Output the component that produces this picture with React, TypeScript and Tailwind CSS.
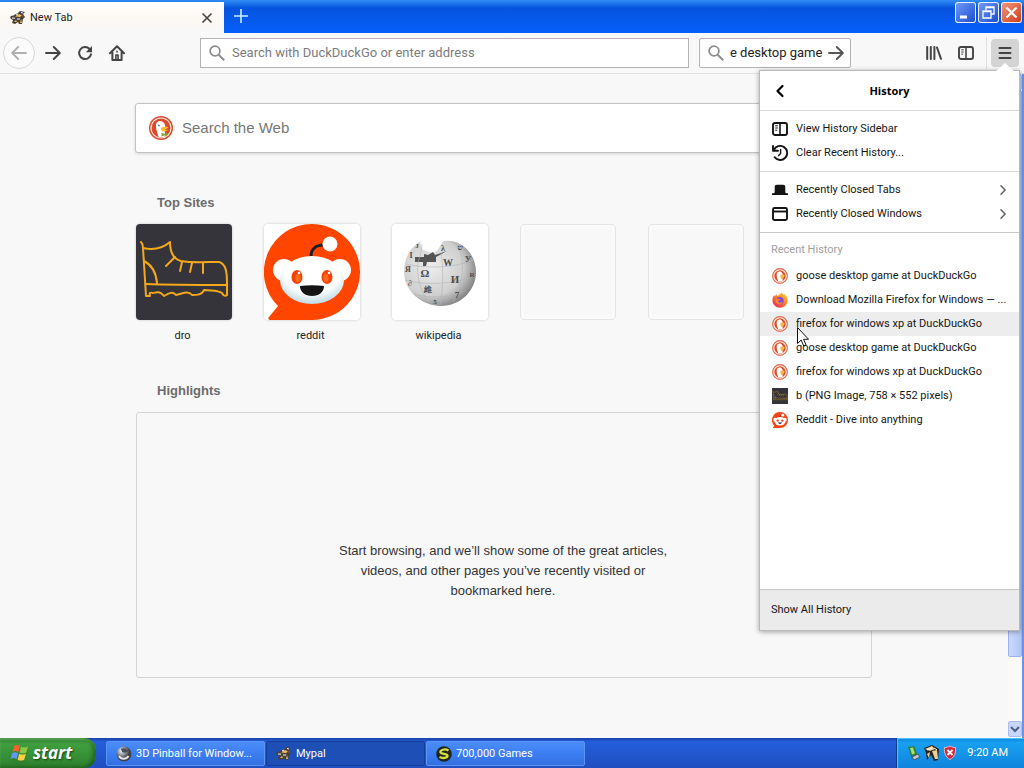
import type { ReactNode } from "react";

const iconBase = "shrink-0 block";

function SearchIcon({ className = "" }: { className?: string }) {
  return (
    <svg viewBox="0 0 16 16" className={`${iconBase} h-4 w-4 ${className}`} fill="none" stroke="currentColor" strokeWidth="1.7">
      <circle cx="6" cy="6" r="4.9" />
      <path d="M9.7 9.7 15.2 15.2" strokeWidth="2" />
    </svg>
  );
}

function ArrowIcon({ left = false, className = "" }: { left?: boolean; className?: string }) {
  return (
    <svg viewBox="0 0 16 16" className={`${iconBase} h-4 w-4 ${className}`} fill="none" stroke="currentColor" strokeWidth="1.9" strokeLinecap="round" strokeLinejoin="round">
      {left ? <path d="M15 8H1.3M7.2 2 1.2 8l6 6" /> : <path d="M1 8h13.7M8.8 2l6 6-6 6" />}
    </svg>
  );
}

function ReloadIcon() {
  return (
    <svg viewBox="0 0 16 16" className={`${iconBase} h-4 w-4`}>
      <path d="M14 9.2A6 6 0 1 1 12.6 4" fill="none" stroke="currentColor" strokeWidth="2" strokeLinecap="round" />
      <path d="M15 1v6.2H8.8z" fill="currentColor" />
    </svg>
  );
}

function HomeIcon() {
  return (
    <svg viewBox="0 0 16 16" className={`${iconBase} h-4 w-4`} fill="none" stroke="currentColor" strokeWidth="2" strokeLinecap="round" strokeLinejoin="round">
      <path d="M1 8.2 8 1.3l7 6.9M3.4 7.5V15h9.2V7.5" />
      <path d="M6.9 14.5V10h2.2v4.5" strokeWidth="1.6" />
      <path d="M8 6.3v.6" strokeWidth="1.6" />
    </svg>
  );
}

function LibraryIcon() {
  return (
    <svg viewBox="0 0 16 16" className={`${iconBase} h-4 w-4`} fill="none" stroke="currentColor" strokeWidth="2" strokeLinecap="round">
      <path d="M1.2 2v12M4.8 2v12M8.4 2v12M11 2.5l4 11.3" />
    </svg>
  );
}

function SidebarIcon() {
  return (
    <svg viewBox="0 0 16 16" className={`${iconBase} h-4 w-4`} fill="none" stroke="currentColor" strokeWidth="1.9">
      <rect x="1" y="2" width="14" height="12" rx="2" />
      <path d="M8 2v12" strokeWidth="1.6" />
      <path d="M3.2 4.8h2.6M3.2 7h2.6M3.2 9.2h2" strokeWidth="1" />
    </svg>
  );
}

function HistoryIcon() {
  return (
    <svg viewBox="0 0 16 16" className={`${iconBase} h-4 w-4`} fill="none" stroke="currentColor" strokeWidth="1.9" strokeLinecap="round">
      <path d="M1.8 5A7 7 0 1 1 2.6 12.200" />
      <path d="M1 1v4.800h5" strokeLinejoin="round" />
      <path d="M8.600 4.500v4L6.500 10.800" strokeWidth="1.400" />
    </svg>
  );
}

function TabShapeIcon() {
  return (
    <svg viewBox="0 0 16 16" className={`${iconBase} h-4 w-4`} fill="currentColor">
      <path d="M0 11.2h1.5c1 0 1.2-.6 1.2-1.4V5c0-1.5.8-2.2 2.200-2.200h6.200c1.400 0 2.200.7 2.200 2.200v4.800c0 .8.2 1.400 1.200 1.400H16V13H0z" />
    </svg>
  );
}

function WindowIcon() {
  return (
    <svg viewBox="0 0 16 16" className={`${iconBase} h-4 w-4`} fill="none" stroke="currentColor" strokeWidth="1.9">
      <rect x="1" y="2" width="14" height="12" rx="1.5" />
      <path d="M1 5.5h14" />
    </svg>
  );
}

function ChevronIcon() {
  return (
    <svg viewBox="0 0 8 12" className={`${iconBase} h-3 w-2 text-[#666]`} fill="none" stroke="currentColor" strokeWidth="1.6" strokeLinecap="round">
      <path d="m2 1.8 4 4.2-4 4.2" />
    </svg>
  );
}

function DuckLogo() {
  return (
    <svg viewBox="0 0 24 24" className="block h-6 w-6 shrink-0">
      <circle cx="12" cy="12" r="12" fill="#d9482b" />
      <circle cx="12" cy="12" r="10.6" fill="#fbe9df" />
      <circle cx="12" cy="12" r="9.4" fill="#dc4a28" />
      <path d="M9.500 20.800C8 16 6.500 12 7 8.500 7.500 5.500 11 4 14 6c2 1.300 2.500 3.500 2.300 6l-.6 3.200.8 5.100c-2.300 1-5 1.200-7 .5z" fill="#fff" />
      <path d="M12 12c2-1.400 5-1.500 7.500-.8-.9 1.400-3 1.700-4.500 2.100 1.500.6 3 .6 4 .4-1.800 2.400-6.400 2.200-7 0z" fill="#fdb92b" />
      <path d="m12.500 17 3.300.8 2.200-.9v3.200l-2.500-.6-3 1z" fill="#86a33c" />
      <circle cx="10" cy="9.500" r="1.100" fill="#6f93c4" />
    </svg>
  );
}

function DuckFavicon() {
  return (
    <svg viewBox="0 0 16 16" className="block h-4 w-4 shrink-0">
      <circle cx="8" cy="8" r="7.400" fill="#fdeee4" stroke="#dc6a4c" strokeWidth="1.100" />
      <circle cx="8" cy="8" r="5.700" fill="#d9502c" />
      <path d="M6.200 13C5 10.500 4.400 8 4.800 5.800 5.200 3.800 7.400 3 9.200 4c1.200.8 1.600 2.200 1.500 3.800L10.300 10l.5 3c-1.500.5-3.200.6-4.600 0z" fill="#fff" />
      <path d="M8.300 7.200c1.500-.8 3-.8 4.300-.3-.3 1.900-1.300 3.600-2.400 4.600-1.200-.8-2-2.600-1.900-4.300z" fill="#efb845" />
    </svg>
  );
}

function FirefoxIcon() {
  return (
    <svg viewBox="0 0 16 16" className="block h-4 w-4 shrink-0">
      <defs>
        <linearGradient id="fox" x1="1" y1="0" x2=".2" y2="1">
          <stop offset="0" stopColor="#ffe23f" />
          <stop offset=".45" stopColor="#ff8b25" />
          <stop offset="1" stopColor="#ec2457" />
        </linearGradient>
      </defs>
      <path d="M9.500.3c1 1.200 1.500 2 1.800 2.800.7-.1.900-.5.900-1 2 1.500 3.500 3.800 3.500 6.400A7.600 7.400 0 0 1 .4 8.300c0-2 .6-3.700 1.700-5l.7 1.300C3.500 3 4 2.500 4.500 2.200L5 4c1.800-.2 3.300-1.800 4.500-3.700z" fill="url(#fox)" />
      <circle cx="8" cy="8.800" r="3.700" fill="#8547d8" />
      <path d="M3.600 7.200c2-1.300 3.600.2 4.900 0-.5 1.500-2.200 1-2.500 2.100.8 1.900 3.300 1.700 4.800.2-.4 2.700-3.100 3.500-5 2.600-1.700-.8-2.500-2.700-2.200-4.900z" fill="#ff8430" />
    </svg>
  );
}

function BootTile() {
  return (
    <svg viewBox="0 0 96 96" className="block h-full w-full">
      <path fill="#34343a" d="M0 0h96v96H0z" />
      <g fill="none" stroke="#f5a81c" strokeWidth="2" strokeLinejoin="round" strokeLinecap="round">
        <path d="M5 18c2 2 2 6 2 6 9 2 19 1 27-6 0 9 3 17 11 19 10 2 25 1 38 1 7 2 8 10 8 21v12c-2 2-4 0-5-2-4-3-10-2-18-3-2 5-7 5-12 5-4-5-10-1-16 0-3-4-7-2-12 1-4-5-7-4-11-3-3-1-4 0-3 3h-4L7 24" />
        <path d="M10 60c25 1 57 1 81 1M8 37c8 4 12 11 13 22" />
        <path d="m39 33-9 9M46 38l-2 9M56 39l-2 9M67 39v10" />
      </g>
    </svg>
  );
}

function RedditArt() {
  return (
    <svg viewBox="0 0 96 96" className="block h-full w-full">
      <defs>
        <radialGradient id="snooFace" cx=".5" cy=".35" r=".65">
          <stop offset=".65" stopColor="#fff" />
          <stop offset="1" stopColor="#bfd9e2" />
        </radialGradient>
      </defs>
      <path fill="#ff4500" d="M48 0a48 48 0 1 1 0 96H6c-2 0-2-2-1-3l9-11A48 48 0 0 1 48 0z" />
      <circle cx="20" cy="46" r="11" fill="#fff" />
      <circle cx="76" cy="46" r="11" fill="#fff" />
      <ellipse cx="48" cy="56" rx="32" ry="24" fill="url(#snooFace)" />
      <path d="M47 32c0-6 4-11 13-11" fill="none" stroke="#182028" strokeWidth="3" />
      <circle cx="66" cy="20" r="7.500" fill="#fff" />
      <ellipse cx="33" cy="53" rx="5.500" ry="7" fill="#f6410a" />
      <ellipse cx="63" cy="53" rx="5.500" ry="7" fill="#f6410a" />
      <ellipse cx="34" cy="54" rx="2.500" ry="4" fill="#ff6a18" />
      <ellipse cx="62" cy="54" rx="2.500" ry="4" fill="#ff6a18" />
      <circle cx="35" cy="49" r="1.300" fill="#fff" />
      <circle cx="65" cy="49" r="1.300" fill="#fff" />
      <path d="M36 62c8-1 16-1 24 0 0 6-5 10-12 10s-12-4-12-10z" fill="#141414" />
    </svg>
  );
}

function RedditIcon() {
  return (
    <svg viewBox="0 0 16 16" className="block h-4 w-4 shrink-0">
      <path fill="#f4451a" d="M8 0a8 8 0 1 1 0 16H.8l1.500-2.400A8 8 0 0 1 8 0z" />
      <circle cx="3.200" cy="7.700" r="1.900" fill="#fff" />
      <circle cx="12.800" cy="7.700" r="1.900" fill="#fff" />
      <ellipse cx="8" cy="9.200" rx="5.500" ry="4.200" fill="#fff" />
      <path d="M8 5c0-1 .7-1.800 2-2" stroke="#333" fill="none" />
      <circle cx="10.800" cy="3.200" r="1.400" fill="#fff" />
      <circle cx="5.700" cy="8.600" r="1.200" fill="#f4451a" />
      <circle cx="10.300" cy="8.600" r="1.200" fill="#f4451a" />
      <path d="M6 10.500h4c-.4 1.900-3.600 1.900-4 0z" fill="#222" />
    </svg>
  );
}

function WikipediaArt() {
  return (
    <svg viewBox="0 0 96 96" className="block h-full w-full">
      <defs>
        <radialGradient id="globe" cx=".38" cy=".4" r=".68">
          <stop offset="0" stopColor="#ededed" />
          <stop offset=".65" stopColor="#cfcfcf" />
          <stop offset="1" stopColor="#777" />
        </radialGradient>
      </defs>
      <path d="M29 17c-2 4 1 6 2 9 4 1 8 4 12 2 4-2 5-8 9-11 18-2 32 13 32 31 0 19-16 34-35 34S12 67 12 48c0-14 6-25 17-31z" fill="url(#globe)" />
      <path d="M23 33h9v-3l4 1 5-3 2 3 12-4-11 6v5h-9l-1 4h-3v-4h-8z" fill="#555" />
      <path d="M30 20c-1 9-2 12-4 18-2 14 3 32 11 40M49 28c2 15 3 34-1 53M66 21c7 16 6 38-5 57M14 40c20 5 48 4 68-4M13 56c23 6 49 4 69-4M22 70c16 5 35 4 51-3" fill="none" stroke="#b4b4b4" strokeWidth=".6" />
      <g fill="#4c4c4c" fontFamily="'Liberation Serif', serif" fontWeight="bold" textAnchor="middle">
        <text x="33" y="53" fontSize="11">Ω</text>
        <text x="56" y="42" fontSize="10">W</text>
        <text x="63" y="59" fontSize="11">И</text>
        <text x="36" y="68" fontSize="8">維</text>
        <text x="65" y="74" fontSize="9">7</text>
        <text x="76" y="38" fontSize="9">У</text>
        <text x="68" y="26" fontSize="8">ש</text>
        <text x="51" y="27" fontSize="8">λ</text>
        <text x="19" y="34" fontSize="8">Ι</text>
        <text x="16" y="48" fontSize="8">Я</text>
        <text x="18" y="62" fontSize="8">∂</text>
        <text x="80" y="53" fontSize="7">R</text>
        <text x="43" y="80" fontSize="7">5</text>
        <text x="25" y="24" fontSize="7">J</text>
      </g>
    </svg>
  );
}

function MypalIcon() {
  return (
    <svg viewBox="0 0 16 16" className="block h-4 w-4 shrink-0">
      <path d="M0 7c2-2 3-.5 4-2l4-2 2-2 5 1-2 2 2 3-2 2-1 5h-3l-1-2-3 2-3-1 1-3-2-1z" fill="#47413a" />
      <path d="M5 6.500 9 4l3 1.500L10 7zM4 12l2-2 1 2zM10 13l1-4 1 4z" fill="#e9bc5d" />
      <path d="m2 8 3 .2M7 9h3M11 2.500l2 .5M6 5l2-1" stroke="#fff" strokeWidth="1" />
      <path d="M12 6h2" stroke="#b3413a" />
    </svg>
  );
}

function WindowsFlag() {
  return (
    <svg viewBox="0 0 20 20" className="block h-5 w-5 shrink-0 drop-shadow-sm">
      <path d="M4 3c2-1.500 4-1.200 6 0L8.400 9c-2-1.200-4-1.300-6-.2z" fill="#f0632c" />
      <path d="M11 3.500c2 1.200 4.300 1.300 7 0L16.200 9.500c-2.400 1.200-4.500 1.100-6.700 0z" fill="#8ccb3f" />
      <path d="M2.100 10c2-1.200 4-1 6 .2l-1.600 6c-2-1.400-4-1.400-6.200-.2z" fill="#5f98f0" />
      <path d="M9.200 10.700c2.200 1.200 4.300 1.200 6.700 0l-1.700 6c-2.400 1.200-4.600 1.200-6.600 0z" fill="#fbd143" />
    </svg>
  );
}

function PinballIcon() {
  return (
    <svg viewBox="0 0 16 16" className="block h-4 w-4 shrink-0">
      <defs>
        <radialGradient id="ball" cx=".35" cy=".3">
          <stop offset="0" stopColor="#fff" />
          <stop offset=".5" stopColor="#9a9ca1" />
          <stop offset="1" stopColor="#404249" />
        </radialGradient>
      </defs>
      <circle cx="8" cy="8" r="7.500" fill="url(#ball)" />
      <path d="M5 3c2-1.500 6-.5 7 2-1 2-5 2-6 1z" fill="#4a4f5d" />
      <path d="M3 10c2 3.500 7 4 9.500 0" stroke="#e7e7e7" strokeWidth="2" fill="none" />
    </svg>
  );
}

function GamesIcon() {
  return (
    <svg viewBox="0 0 16 16" className="block h-4 w-4 shrink-0">
      <circle cx="8" cy="8" r="7.800" fill="#20251c" />
      <path d="M12.500 4.500C9 2.300 3.800 4 4.500 6.500c.8 2 7 .8 7 3.300 0 2.200-4.500 3-8 1.200" fill="none" stroke="#d5df42" strokeWidth="2.300" />
    </svg>
  );
}

const topSites: { name: string; art: ReactNode }[] = [
  { name: "dro", art: <BootTile /> },
  { name: "reddit", art: <RedditArt /> },
  { name: "wikipedia", art: <WikipediaArt /> },
];

const historyItems: { title: string; icon: ReactNode; active?: boolean }[] = [
  { title: "goose desktop game at DuckDuckGo", icon: <DuckFavicon /> },
  { title: "Download Mozilla Firefox for Windows — ...", icon: <FirefoxIcon /> },
  { title: "firefox for windows xp at DuckDuckGo", icon: <DuckFavicon />, active: true },
  { title: "goose desktop game at DuckDuckGo", icon: <DuckFavicon /> },
  { title: "firefox for windows xp at DuckDuckGo", icon: <DuckFavicon /> },
  {
    title: "b (PNG Image, 758 × 552 pixels)",
    icon: (
      <div className="h-4 w-4 shrink-0">
        <BootTile />
      </div>
    ),
  },
  { title: "Reddit - Dive into anything", icon: <RedditIcon /> },
];

function MenuRow({ icon, label, submenu, active }: { icon: ReactNode; label: string; submenu?: boolean; active?: boolean }) {
  return (
    <li>
      <button className={`flex h-6 w-full items-center gap-2 px-3 text-left ${active ? "bg-[#ededed]" : ""}`}>
        {icon}
        <span className="min-w-0 flex-1 truncate">{label}</span>
        {submenu && <ChevronIcon />}
      </button>
    </li>
  );
}

function HistoryPanel() {
  return (
    <section
      aria-label="History"
      className="absolute top-[37px] right-1 z-20 flex h-[561px] w-[261px] flex-col border border-[#b9b9b9] bg-white text-[#151515] shadow-[0_1px_5px_rgba(0,0,0,0.35)]"
    >
      <svg viewBox="0 0 20 9" className="absolute -top-2 right-1 h-[9px] w-5">
        <path d="M0 9 10 0l10 9z" fill="#fff" />
      </svg>
      <header className="flex h-10 shrink-0 items-center border-b border-[#d9d9d9] px-3">
        <button aria-label="Back" className="flex h-6 w-4 items-center justify-center text-black">
          <svg viewBox="0 0 16 16" className="h-4 w-4" fill="none" stroke="currentColor" strokeWidth="2.200" strokeLinecap="round" strokeLinejoin="round">
            <path d="M10.500 3 5.500 8l5 5" />
          </svg>
        </button>
        <h2 className="flex-1 pr-4 text-center font-['Open_Sans',sans-serif] font-bold text-black">History</h2>
      </header>
      <ul className="border-b border-[#d9d9d9] py-[6px]">
        <MenuRow icon={<SidebarIcon />} label="View History Sidebar" />
        <MenuRow icon={<HistoryIcon />} label="Clear Recent History..." />
      </ul>
      <ul className="border-b border-[#c9c9c9] py-[6px]">
        <MenuRow icon={<TabShapeIcon />} label="Recently Closed Tabs" submenu />
        <MenuRow icon={<WindowIcon />} label="Recently Closed Windows" submenu />
      </ul>
      <h3 className="px-[11px] pt-[9px] pb-[6px] leading-4 text-[#a0a0a0]">Recent History</h3>
      <ul className="flex-1">
        {historyItems.map((item, i) => (
          <MenuRow key={i} icon={item.icon} label={item.title} active={item.active} />
        ))}
      </ul>
      <button className="h-[41px] shrink-0 border-t border-[#c4c4c4] bg-[#ebebeb] px-[11px] text-left">Show All History</button>
      <svg viewBox="0 0 12 20" className="absolute top-[256px] left-[37px] z-30 h-5 w-3">
        <path d="M.5.5v16l3.700-3.500 2.500 6 2.400-1-2.500-5.700h5z" fill="#fff" stroke="#111" />
      </svg>
    </section>
  );
}

function Toolbar() {
  return (
    <div className="relative flex h-[41px] shrink-0 items-center border-b border-[#e2e2e2] bg-[#f8f8f9] pr-[5px] text-[#444]">
      <div className="flex w-[200px] shrink-0 items-center">
        <button aria-label="Back" className="ml-[3px] flex h-8 w-8 items-center justify-center rounded-full border border-[#d8d8d8] bg-[#fbfbfb] text-[#b0b0b0]">
          <ArrowIcon left />
        </button>
        <button aria-label="Forward" className="flex h-8 w-8 items-center justify-center pl-1">
          <ArrowIcon />
        </button>
        <button aria-label="Reload" className="flex h-8 w-8 items-center justify-center pl-1">
          <ReloadIcon />
        </button>
        <button aria-label="Home" className="flex h-8 w-8 items-center justify-center pl-1">
          <HomeIcon />
        </button>
      </div>
      <label className="flex h-[30px] min-w-0 flex-1 items-center gap-[7px] border border-[#b4b4b4] bg-white px-2">
        <SearchIcon className="text-[#8c8c8c]" />
        <input aria-label="Address" placeholder="Search with DuckDuckGo or enter address" className="min-w-0 flex-1 bg-transparent text-[13px] outline-none placeholder:text-[#7c7c7c]" />
      </label>
      <div className="ml-[10px] flex h-[30px] w-[152px] shrink-0 items-center rounded-xs border border-[#b4b4b4] bg-white px-2">
        <SearchIcon className="text-[#8c8c8c]" />
        <input aria-label="Search" defaultValue="e desktop game" className="ml-[6px] w-0 min-w-0 flex-1 bg-transparent text-[13px] text-[#222] outline-none" />
        <button aria-label="Go" className="-mr-[2px] text-[#555]">
          <ArrowIcon />
        </button>
      </div>
      <div className="ml-[67px] flex shrink-0 items-center">
        <button aria-label="Library" className="flex h-8 w-8 items-center justify-center">
          <LibraryIcon />
        </button>
        <button aria-label="Sidebars" className="flex h-8 w-8 items-center justify-center">
          <SidebarIcon />
        </button>
        <div className="mr-1 ml-1 h-8 w-px bg-[#ddd]" />
        <button aria-label="Open menu" className="flex h-7 w-7 items-center justify-center rounded-sm bg-[#d4d4d4]">
          <svg viewBox="0 0 16 16" className="h-4 w-4" stroke="currentColor" strokeWidth="2" strokeLinecap="round">
            <path d="M2.500 3h11M2.500 8h11M2.500 13h11" />
          </svg>
        </button>
      </div>
      <HistoryPanel />
    </div>
  );
}

function TitleBar() {
  return (
    <div className="flex h-[33px] shrink-0 items-start bg-linear-to-b from-[#2f8cf5] via-[#0653dd] via-25% to-[#0560fb]">
      <div className="mt-[2px] flex h-[31px] w-[224px] items-center bg-linear-to-b from-white via-[#fdf8f2] to-[#f8f8f9] pr-[9px] pl-[10px] text-[#222]">
        <MypalIcon />
        <span className="ml-1 flex-1">New Tab</span>
        <button aria-label="Close tab" className="flex h-4 w-4 items-center justify-center text-[#444]">
          <svg viewBox="0 0 12 12" className="h-3 w-3" stroke="currentColor" strokeWidth="1.600">
            <path d="m1.500 1.500 9 9M10.500 1.500l-9 9" />
          </svg>
        </button>
      </div>
      <button aria-label="New tab" className="flex h-8 w-[34px] items-center justify-center text-[#cdf0ff]">
        <svg viewBox="0 0 14 14" className="h-[14px] w-[14px]" stroke="currentColor" strokeWidth="1.600">
          <path d="M7 0v14M0 7h14" />
        </svg>
      </button>
      <div className="mt-[2px] mr-[2px] ml-auto flex gap-[2px]">
        <button aria-label="Minimize" className="h-[21px] w-[21px] rounded-[3px] border border-white/90 bg-linear-to-br from-[#6f98f5] to-[#1c4ed0]">
          <svg viewBox="0 0 19 19" className="h-full w-full">
            <path d="M4 12.500h7v3H4z" fill="#fff" />
          </svg>
        </button>
        <button aria-label="Restore" className="h-[21px] w-[21px] rounded-[3px] border border-white/90 bg-linear-to-br from-[#6f98f5] to-[#1c4ed0]">
          <svg viewBox="0 0 19 19" className="h-full w-full" fill="none" stroke="#fff" strokeWidth="1.300">
            <path d="M7 7V4h8v7h-3M7 4.500h8M4 8h8v7H4zM4 8.700h8" />
          </svg>
        </button>
        <button aria-label="Close" className="h-[21px] w-[21px] rounded-[3px] border border-white/90 bg-linear-to-br from-[#f09376] to-[#cf3c0c]">
          <svg viewBox="0 0 19 19" className="h-full w-full" stroke="#fff" strokeWidth="2.200">
            <path d="m4.500 4.500 10 10M14.500 4.500l-10 10" />
          </svg>
        </button>
      </div>
    </div>
  );
}

function NewTabPage() {
  return (
    <main className="min-w-0 flex-1 bg-[#f8f8f9] px-6 pt-[29px] pb-[60px] font-['Liberation_Sans',Arial,sans-serif]">
      <div className="mx-auto max-w-[738px]">
        <label className="flex h-[50px] items-center gap-[9px] rounded-[3px] border border-[#c3c3c3] bg-white px-[13px] shadow-[0_1px_3px_rgba(0,0,0,0.15)]">
          <DuckLogo />
          <input aria-label="Search the Web" placeholder="Search the Web" className="min-w-0 flex-1 bg-transparent text-[15px] outline-none placeholder:text-[#777]" />
        </label>
        <h2 className="mt-10 ml-[22px] text-[13px] leading-5 font-bold text-[#6c6c6c]">Top Sites</h2>
        <ul className="mt-[11px] flex gap-8 px-px">
          {topSites.map((site) => (
            <li key={site.name} className="w-24 shrink-0">
              <a href={`#${site.name}`} className="block">
                <div className="h-24 overflow-hidden rounded-[4px] bg-white shadow-[0_0_3px_rgba(0,0,0,0.2)]">{site.art}</div>
                <div className="mt-2 pr-[3px] text-center font-['Roboto','Noto_Sans',sans-serif] text-[11px] leading-4 text-[#222]">{site.name}</div>
              </a>
            </li>
          ))}
          {[0, 1, 2].map((slot) => (
            <li key={slot} className="h-24 w-24 shrink-0 rounded-[4px] border border-[#e4e4e4] shadow-[inset_0_0_0_3px_#fafafa]" />
          ))}
        </ul>
        <h2 className="mt-[37px] ml-[22px] text-[13px] leading-5 font-bold text-[#6c6c6c]">Highlights</h2>
        <div className="mx-px mt-[11px] flex h-[266px] items-center justify-center rounded-[3px] border border-[#d4d4d4] pt-[51px] pr-[2px]">
          <p className="w-[340px] text-center text-[13px] leading-5 text-[#333]">
            Start browsing, and we’ll show some of the great articles, videos, and other pages you’ve recently visited or bookmarked here.
          </p>
        </div>
      </div>
    </main>
  );
}

function ScrollBar() {
  return (
    <div className="flex w-4 shrink-0 flex-col border-r-2 border-[#6f92e8] bg-[#fafaf7]">
      <div className="h-4 rounded-xs border border-[#a9bdf0] bg-[#c8d6fb]" />
      <div className="h-[567px] rounded-xs border border-[#9db1ea] bg-linear-to-r from-[#cad8fd] to-[#b2c6f8]" />
      <div className="mt-auto mb-px flex h-4 items-center justify-center rounded-xs border border-[#a9bdf0] bg-[#c8d6fb]">
        <svg viewBox="0 0 10 8" className="h-2 w-[10px]" fill="none" stroke="#4d6185" strokeWidth="2">
          <path d="m1 2 4 4 4-4" />
        </svg>
      </div>
    </div>
  );
}

const tasks: { label: string; icon: ReactNode; active?: boolean }[] = [
  { label: "3D Pinball for Window...", icon: <PinballIcon /> },
  { label: "Mypal", icon: <MypalIcon />, active: true },
  { label: "700,000 Games", icon: <GamesIcon /> },
];

function Taskbar() {
  return (
    <footer className="flex h-[30px] shrink-0 items-stretch bg-linear-to-b from-[#1941a5] via-[#245edb] via-12% to-[#1f4fc0] text-white">
      <button className="flex w-24 shrink-0 items-center gap-[3px] rounded-r-[12px] bg-linear-to-b from-[#2f7a30] via-[#3f9f3f] via-20% to-[#2f812f] pl-[10px] shadow-[inset_-3px_-1px_4px_rgba(0,60,0,0.5),inset_0_2px_2px_rgba(140,220,130,0.5)]">
        <WindowsFlag />
        <span className="font-['Open_Sans',sans-serif] text-[17px] leading-5 font-bold italic [text-shadow:1px_1px_2px_#14420f]">start</span>
      </button>
      <div className="ml-[10px] flex min-w-0 flex-1 items-end gap-px pb-[2px]">
        {tasks.map((task) => (
          <button
            key={task.label}
            className={`flex h-[25px] w-[159px] items-center gap-1 rounded-[2px] border pr-2 pl-[9px] text-left ${
              task.active ? "border-[#173d9a] bg-[#1e4fb7]" : "border-[#5a94f6] bg-linear-to-b from-[#4c8cf8] via-[#3c7ff3] to-[#346fe0]"
            }`}
          >
            {task.icon}
            <span className="min-w-0 truncate">{task.label}</span>
          </button>
        ))}
      </div>
      <div className="flex w-32 shrink-0 items-center border-l border-[#0b3d92] bg-linear-to-b from-[#0d7ed9] via-[#18a0f0] via-15% to-[#1184dd] pr-4 pl-[9px] shadow-[inset_1px_1px_1px_#55c5ff]">
        <div className="flex items-center gap-[2px]">
          <svg viewBox="0 0 16 16" className="h-4 w-4">
            <path d="m2 2 6-1 4 10-6 3z" fill="#317c39" />
            <path d="m4 3 3-.5 2 6-3 1z" fill="#a7e06e" />
            <path d="m6 12 6-3 2 3-6 3z" fill="#c2c8d8" stroke="#435273" />
          </svg>
          <svg viewBox="0 0 16 16" className="h-4 w-4">
            <path d="M0 3 8 0l7 4-1 11-4 1-3-6-4 5-1-7z" fill="#222" />
            <path d="m1 4 7-3 3 3-5 2zM8 6l5-1 1 9h-3zM3 9l3-2-1 6z" fill="#f4d28d" />
            <path d="m3 5 5-2M10 3l3 2" stroke="#fff" />
          </svg>
          <svg viewBox="0 0 16 16" className="h-4 w-4">
            <path d="M8 1c2 1.200 3.600 1.500 5.500 1.500.5 5.500-1 9.500-5.500 12C3.500 12 2 8 2.500 2.500 4.400 2.500 6 2.200 8 1z" fill="#d5263a" stroke="#e9bdc3" />
            <path d="m5.500 5 5 5M10.500 5l-5 5" stroke="#fff" strokeWidth="1.800" />
          </svg>
        </div>
        <time className="ml-auto whitespace-nowrap">9:20 AM</time>
      </div>
    </footer>
  );
}

export default function App() {
  return (
    <div className="flex min-h-screen flex-col bg-[#f8f8f9] font-['Roboto','Noto_Sans',sans-serif] text-[11px] leading-4">
      <TitleBar />
      <Toolbar />
      <div className="flex flex-1">
        <NewTabPage />
        <ScrollBar />
      </div>
      <Taskbar />
    </div>
  );
}
